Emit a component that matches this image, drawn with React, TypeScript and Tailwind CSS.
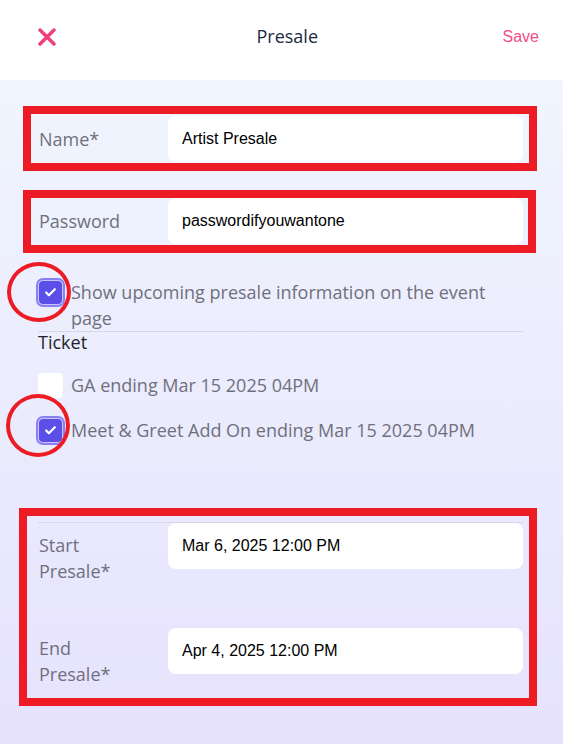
import { Check } from 'lucide-react';

const sans = "font-['Open_Sans',sans-serif]";
const arial = "font-['Liberation_Sans',Arial,sans-serif]";

function Mark({ className }: { className: string }) {
  // red annotation rectangle drawn over the form
  return <div className={`pointer-events-none absolute border-[8px] border-[#ed1c24] ${className}`} />;
}

function Ring({ className }: { className: string }) {
  return <div className={`pointer-events-none absolute rounded-[50%] border-[4px] border-[#ed1c24] ${className}`} />;
}

function Box({ checked, ring }: { checked: boolean; ring?: string }) {
  return (
    <div className="relative shrink-0">
      {checked ? (
        <div className="flex h-[25px] w-[25px] items-center justify-center rounded-[5px] border border-[#c9c4fb] bg-[#5b4fe8] outline-2 outline-[#8a80f6]">
          <Check size={13} strokeWidth={4} className="text-white" />
        </div>
      ) : (
        <div className="h-[25px] w-[25px] rounded-[4px] bg-white" />
      )}
      {ring && <Ring className={ring} />}
    </div>
  );
}

function Field({ label, value, mark, className }: { label: string; value: string; mark: string; className: string }) {
  return (
    <div className={`relative flex h-[46px] items-center ${className}`}>
      <span className={`w-[130px] shrink-0 pl-[1px] text-[18px] text-[#70707c] ${sans}`}>{label}</span>
      <div className={`flex h-full flex-1 items-center rounded-lg bg-white px-[14px] text-[16px] text-black ${arial}`}>
        {value}
      </div>
      <Mark className={mark} />
    </div>
  );
}

function DateRow({ label, sub, value, className }: { label: string; sub: string; value: string; className: string }) {
  return (
    <div className="flex items-start">
      <div className={`w-[130px] shrink-0 pl-[1px] text-[18px] leading-[26px] text-[#70707c] ${sans} ${className}`}>
        <div>{label}</div>
        <div>{sub}</div>
      </div>
      <div className={`flex h-[46px] flex-1 items-center rounded-lg bg-white px-[14px] text-[16px] text-black ${arial}`}>
        {value}
      </div>
    </div>
  );
}

export default function App() {
  return (
    <div className="flex min-h-screen flex-col">
      {/* Header */}
      <header className="flex h-[80px] items-center bg-white pb-[7px] pl-[38px] pr-[24px]">
        <svg width="18" height="18" viewBox="0 0 18 18" className="shrink-0">
          <path d="M2 2 L16 16 M16 2 L2 16" stroke="#f0407a" strokeWidth="3.5" strokeLinecap="round" />
        </svg>
        <h1 className={`flex-1 pl-[16px] text-center text-[18px] text-[#1b2a41] ${sans}`}>Presale</h1>
        <button className={`text-[16px] text-[#f54b86] ${arial}`}>Save</button>
      </header>

      <main className="flex-1 bg-gradient-to-b from-[#f0f5fe] to-[#e6e2fd] pl-[38px] pr-[40px] pb-[40px]">
        <Field
          label="Name*"
          value="Artist Presale"
          className="mt-[36px]"
          mark="-top-[10px] -bottom-[9px] -left-[15px] -right-[14px]"
        />
        <Field
          label="Password"
          value="passwordifyouwantone"
          className="mt-[36px]"
          mark="-top-[8px] -bottom-[9px] -left-[15px] -right-[13px]"
        />

        <div className="mt-[35px] flex items-start gap-[8px]">
          <div className="mt-[1px]">
            <Box checked ring="-left-[31px] -top-[18px] h-[60px] w-[64px]" />
          </div>
          <p className={`w-[430px] text-[18px] leading-[26px] text-[#70707c] ${sans}`}>
            Show upcoming presale information on the event page
          </p>
        </div>

        <div className="h-px bg-[#d8d6e6]" />
        <div className={`text-[18px] leading-[20px] text-[#1f1f29] ${sans}`}>Ticket</div>

        <div className="mt-[21px] flex h-[25px] items-center gap-[8px]">
          <Box checked={false} />
          <span className={`text-[18px] leading-[25px] text-[#70707c] ${sans}`}>GA ending Mar 15 2025 04PM</span>
        </div>
        <div className="mt-[20px] flex h-[25px] items-center gap-[8px]">
          <Box checked ring="-left-[32px] -top-[24px] h-[63px] w-[64px]" />
          <span className={`text-[18px] leading-[25px] text-[#70707c] ${sans}`}>
            Meet &amp; Greet Add On ending Mar 15 2025 04PM
          </span>
        </div>

        <section className="relative mt-[79px]">
          <div className="h-px bg-[#d8d6e6]" />
          <DateRow label="Start" sub="Presale*" value="Mar 6, 2025 12:00 PM" className="pt-[9px]" />
          <div className="mt-[44px]">
            <DateRow label="End" sub="Presale*" value="Apr 4, 2025 12:00 PM" className="pt-[7px]" />
          </div>
          <Mark className="-top-[14px] -bottom-[19px] -left-[19px] -right-[14px]" />
        </section>
      </main>
    </div>
  );
}
